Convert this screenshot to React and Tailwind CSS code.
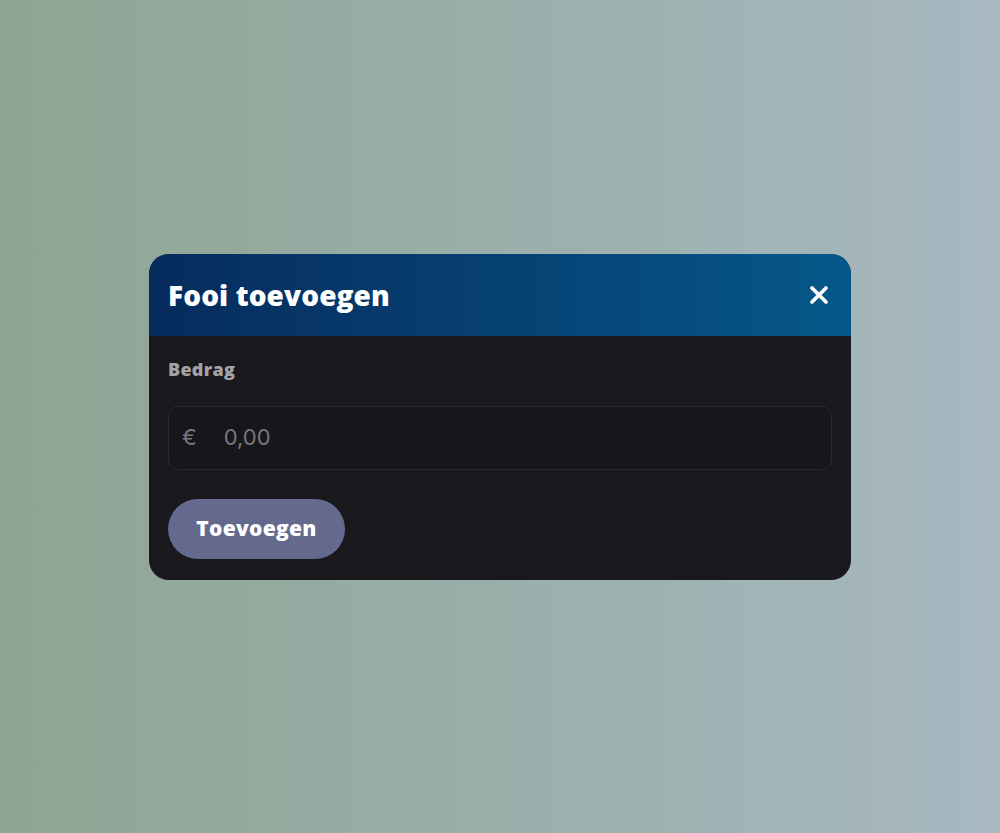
import { X } from 'lucide-react'

const heading = { fontFamily: '"Open Sans", "Noto Sans", sans-serif' }
const body = { fontFamily: 'Inter, "Noto Sans", sans-serif' }

const TipDialog = () => (
  <div className="w-[702px] rounded-[20px] overflow-hidden bg-[#19181d]">
    <div className="h-[82px] flex items-center justify-between pl-[19px] pr-[18px]
      bg-gradient-to-r from-[#062b5c] to-[#06588a]">
      <h2 className="text-[28px] font-extrabold text-white tracking-[0.1px]" style={heading}>
        Fooi toevoegen
      </h2>
      <button className="text-white" aria-label="Sluiten">
        <X size={28} strokeWidth={3.2} />
      </button>
    </div>

    <div className="px-[19px] pt-[20px] pb-[21px]">
      <p className="text-[18px] font-extrabold text-[#a3a3a6] leading-[26px] tracking-[0.3px]"
        style={heading}>
        Bedrag
      </p>

      <div className="mt-[24px] h-[64px] rounded-[10px] border border-[#2b2b30] bg-[#17161b]
        flex items-center px-[13px]" style={body}>
        <span className="text-[22px] text-[#77777c]">€</span>
        <span className="ml-[27px] text-[22px] text-[#77777c]">0,00</span>
      </div>

      <button className="mt-[29px] h-[60px] w-[177px] rounded-full bg-[#636a8e] text-white
        text-[21px] font-extrabold tracking-[0.3px]" style={heading}>
        Toevoegen
      </button>
    </div>
  </div>
)

const App = () => (
  <div className="w-full h-[833px] flex items-center justify-center
    bg-gradient-to-r from-[#8da593] to-[#a7b8c1]">
    <TipDialog />
  </div>
)

export default App
